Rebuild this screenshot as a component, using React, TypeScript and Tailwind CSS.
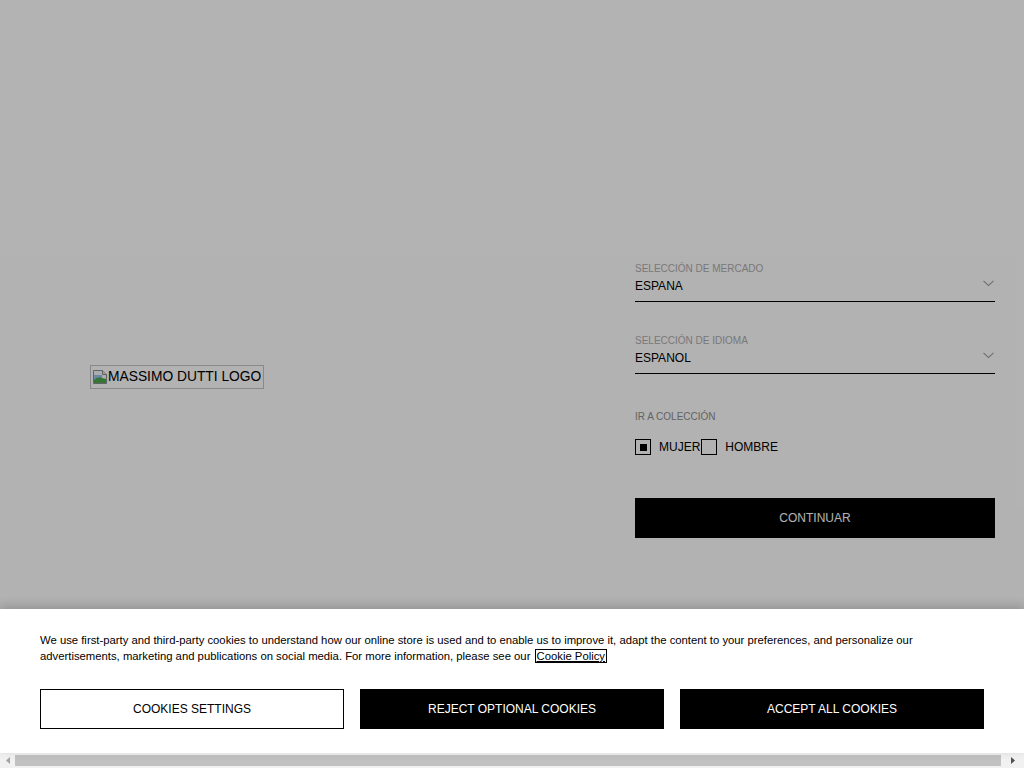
import React from "react";

function BrokenImg() {
  return (
    <svg width="16" height="16" viewBox="0 0 16 16" className="shrink-0">
      <path d="M1.5 1.5h9l4 4v9h-13z" fill="#f4f6f8" stroke="#8a8f96" />
      <path d="M10.5 1.5v4h4" fill="#dfe3e8" stroke="#8a8f96" />
      <path d="M2 6h8v8H2z" fill="#9cc3ee" />
      <path d="M2 14 L2 11 Q6 7 10 9 L14 10 L14 14 Z" fill="#4caa4c" />
    </svg>
  );
}

function Chevron() {
  return (
    <svg width="11" height="7" viewBox="0 0 11 7" className="shrink-0">
      <path d="M0.5 0.8 L5.5 5.6 L10.5 0.8" fill="none" stroke="#9a9a9a" strokeWidth="1.1" />
    </svg>
  );
}

function Select({ label, value }: { label: string; value: string }) {
  return (
    <div className="flex flex-col border-b border-black pb-[8px]">
      <span className="text-[10px] leading-[12px] text-[#adadad]">{label}</span>
      <div className="mt-[4px] flex items-center justify-between">
        <span className="text-[12px] leading-[14px] text-black">{value}</span>
        <span className="mb-[5px] mr-[1px]"><Chevron /></span>
      </div>
    </div>
  );
}

export default function App() {
  return (
    <div className="flex h-[768px] w-[1024px] flex-col overflow-hidden bg-white font-['Liberation_Sans',Arial,sans-serif] text-black">
      <div className="relative h-[609px] shrink-0">
        <div className="flex">
          <div className="w-[635px] shrink-0 pl-[90px] pt-[365px]">
            <div className="inline-flex h-[24px] items-center border border-[#c4c4c4] pl-[1px] pr-[2px]">
              <BrokenImg />
              <span className="text-[13.8px] leading-[16px] text-black">MASSIMO DUTTI LOGO</span>
            </div>
          </div>
          <div className="flex w-[360px] shrink-0 flex-col pt-[263px]">
            <Select label="SELECCIÓN DE MERCADO" value="ESPANA" />
            <div className="h-[33px]" />
            <Select label="SELECCIÓN DE IDIOMA" value="ESPANOL" />
            <div className="mt-[37px] text-[10px] leading-[12px] text-[#8e8e8e]">IR A COLECCIÓN</div>
            <div className="mt-[16px] flex items-center text-[12px] leading-[14px]">
              <span className="flex h-[16px] w-[16px] items-center justify-center border border-black">
                <span className="h-[7px] w-[7px] bg-black" />
              </span>
              <span className="ml-[8px]">MUJER</span>
              <span className="ml-[1px] h-[16px] w-[16px] border border-black" />
              <span className="ml-[8px]">HOMBRE</span>
            </div>
            <button className="mt-[43px] flex h-[40px] w-full items-center justify-center bg-black text-[12px] text-white">
              CONTINUAR
            </button>
          </div>
        </div>
        <div className="absolute inset-0 bg-black/30" />
      </div>
      <div className="relative flex h-[144px] shrink-0 flex-col bg-white px-[40px] shadow-[0_-3px_10px_rgba(0,0,0,0.18)]">
        <p className="mt-[23px] w-[900px] text-[11.3px] leading-[16px] text-black">
          We use first-party and third-party cookies to understand how our online store is used and to enable us to improve it, adapt the content to your preferences, and personalize our advertisements, marketing and publications on social media. For more information, please see our{" "}
          <a className="ml-[2px] px-[1px] underline outline outline-1 outline-black">Cookie Policy</a>
        </p>
        <div className="mt-[25px] flex gap-[16px]">
          <button className="flex h-[40px] w-[304px] items-center justify-center border border-black bg-white text-[12px] text-black">
            COOKIES SETTINGS
          </button>
          <button className="flex h-[40px] w-[304px] items-center justify-center bg-black text-[12px] text-white">
            REJECT OPTIONAL COOKIES
          </button>
          <button className="flex h-[40px] w-[304px] items-center justify-center bg-black text-[12px] text-white">
            ACCEPT ALL COOKIES
          </button>
        </div>
      </div>
      <div className="flex h-[15px] shrink-0 items-center bg-[#f1f1f1]">
        <div className="flex h-[15px] w-[15px] items-center justify-center">
          <svg width="4" height="7" viewBox="0 0 4 7"><path d="M4 0 L0 3.5 L4 7 Z" fill="#a3a3a3" /></svg>
        </div>
        <div className="h-[11px] w-[986px] bg-[#c1c1c1]" />
        <div className="flex h-[15px] flex-1 items-center justify-center">
          <svg width="4" height="7" viewBox="0 0 4 7"><path d="M0 0 L4 3.5 L0 7 Z" fill="#505050" /></svg>
        </div>
      </div>
    </div>
  );
}
